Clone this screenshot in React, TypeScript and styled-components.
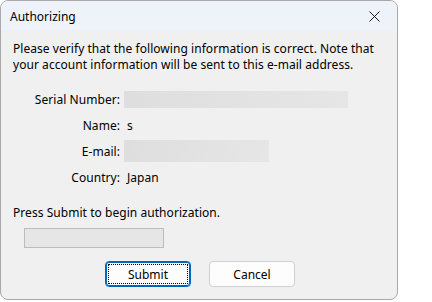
import React from "react";
import styled, { createGlobalStyle } from "styled-components";

const Global = createGlobalStyle`
  html, body {
    margin: 0;
    padding: 0;
    background: #ffffff;
  }
  body {
    font-family: "Noto Sans", "Open Sans", sans-serif;
    font-size: 12px;
    color: #000000;
  }
`;

const Screen = styled.div`
  width: 432px;
  height: 302px;
  overflow: hidden;
  background: #ffffff;
`;

const Window = styled.div`
  width: 398px;
  height: 300px;
  box-sizing: border-box;
  border: 1px solid #a8a8a8;
  border-radius: 8px;
  background: #f0f0f0;
  overflow: hidden;
  display: flex;
  flex-direction: column;
`;

const TitleBar = styled.div`
  height: 30px;
  flex: none;
  display: flex;
  align-items: center;
  justify-content: space-between;
  padding: 0 8px 0 9px;
  background: #eef3f9;
`;

const Title = styled.span`
  font-size: 12px;
  color: #000000;
`;

const CloseButton = styled.div`
  width: 30px;
  height: 30px;
  display: flex;
  align-items: center;
  justify-content: center;
`;

const Body = styled.div`
  padding: 10px 12px 0 12px;
  display: flex;
  flex-direction: column;
  letter-spacing: 0.05px;
`;

const Intro = styled.p`
  margin: 0;
  line-height: 16px;
`;

const InfoGrid = styled.div`
  margin-top: 13px;
  display: grid;
  grid-template-columns: 107px 1fr;
  column-gap: 4px;
`;

const Label = styled.div<{ $h: number }>`
  height: ${p => p.$h}px;
  display: flex;
  align-items: center;
  justify-content: flex-end;
`;

const Value = styled.div<{ $h: number }>`
  height: ${p => p.$h}px;
  display: flex;
  align-items: center;
  padding-left: 3px;
`;

const Field = styled.div<{ $w: number; $h: number }>`
  width: ${p => p.$w}px;
  height: ${p => p.$h}px;
  margin-left: -3px;
  background: linear-gradient(100deg, #dedede 0%, #e6e6e6 100%);
`;

const Hint = styled.div`
  margin-top: 13px;
  line-height: 16px;
`;

const Progress = styled.div`
  margin: 7px 0 0 11px;
  width: 140px;
  height: 20px;
  box-sizing: border-box;
  border: 1px solid #bcbcbc;
  background: #e6e6e6;
`;

const Buttons = styled.div`
  margin-top: 13px;
  display: flex;
  gap: 18px;
  padding-left: 92px;
`;

const Button = styled.button<{ $default?: boolean }>`
  width: 86px;
  height: 26px;
  box-sizing: border-box;
  padding: 0;
  border-radius: 4px;
  background: #fdfdfd;
  border: 1px solid ${p => (p.$default ? "#0067c0" : "#d0d0d0")};
  box-shadow: ${p => (p.$default ? "inset 0 0 0 1px #0067c0" : "none")};
  font-family: inherit;
  font-size: 12px;
  color: #000000;
  display: flex;
  align-items: center;
  justify-content: center;
  position: relative;
`;

const FocusRing = styled.span`
  position: absolute;
  inset: 2px;
  border: 1px dotted #000000;
  border-radius: 1px;
`;

const rows = [
  { label: "Serial Number:", h: 26, field: { w: 224, h: 17 } },
  { label: "Name:", h: 27, text: "s" },
  { label: "E-mail:", h: 24, field: { w: 145, h: 22 } },
  { label: "Country:", h: 29, text: "Japan" },
];

export default function App() {
  return (
    <Screen>
      <Global />
      <Window>
        <TitleBar>
          <Title>Authorizing</Title>
          <CloseButton>
            <svg width="11" height="11" viewBox="0 0 11 11">
              <path d="M0.5 0.5 L10.5 10.5 M10.5 0.5 L0.5 10.5" stroke="#1a1a1a" strokeWidth="1" fill="none" />
            </svg>
          </CloseButton>
        </TitleBar>
        <Body>
          <Intro>
            Please verify that the following information is correct. Note that
            <br />
            your account information will be sent to this e-mail address.
          </Intro>
          <InfoGrid>
            {rows.map(r => (
              <React.Fragment key={r.label}>
                <Label $h={r.h}>{r.label}</Label>
                <Value $h={r.h}>
                  {r.field ? <Field $w={r.field.w} $h={r.field.h} /> : r.text}
                </Value>
              </React.Fragment>
            ))}
          </InfoGrid>
          <Hint>Press Submit to begin authorization.</Hint>
          <Progress />
          <Buttons>
            <Button $default>
              <FocusRing />
              Submit
            </Button>
            <Button>Cancel</Button>
          </Buttons>
        </Body>
      </Window>
    </Screen>
  );
}
